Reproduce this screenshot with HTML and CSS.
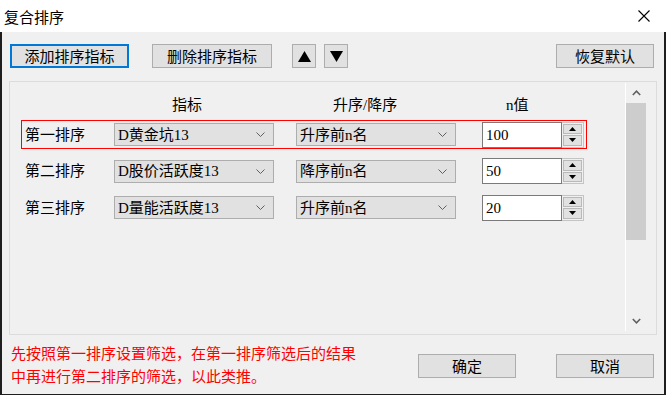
FILE: index.html
```html
<!DOCTYPE html>
<html lang="zh-CN">
<head>
  <meta charset="UTF-8">
  <title>复合排序</title>
  <link rel="stylesheet" href="styles.css">
</head>
<body>
  <div class="window">
    <div class="titlebar">
      <span class="title">复合排序</span>
      <svg class="close" width="12" height="12" viewBox="0 0 12 12"><path d="M0.5 0.5 L11.5 11.5 M11.5 0.5 L0.5 11.5" stroke="#000" stroke-width="1.1" fill="none"/></svg>
    </div>

    <div class="client">
      <div class="toolbar">
        <button class="btn wide focused">添加排序指标</button>
        <button class="btn wide del">删除排序指标</button>
        <button class="btn arrow up"><svg width="13" height="11" viewBox="0 0 13 11"><polygon points="6.5,0 13,11 0,11" fill="#000"/></svg></button>
        <button class="btn arrow down"><svg width="13" height="11" viewBox="0 0 13 11"><polygon points="0,0 13,0 6.5,11" fill="#000"/></svg></button>
        <button class="btn reset">恢复默认</button>
      </div>

      <div class="panel">
        <div class="list">
          <div class="list-head">
            <span></span>
            <span>指标</span>
            <span>升序/降序</span>
            <span>n值</span>
          </div>

          <div class="row selected">
            <span class="row-label">第一排序</span>
            <div class="combo"><span>D黄金坑13</span><svg width="9" height="5" viewBox="0 0 9 5"><polyline points="0.5,0.5 4.5,4.5 8.5,0.5" stroke="#606060" fill="none"/></svg></div>
            <div class="combo dir"><span>升序前n名</span><svg width="9" height="5" viewBox="0 0 9 5"><polyline points="0.5,0.5 4.5,4.5 8.5,0.5" stroke="#606060" fill="none"/></svg></div>
            <div class="spin">
              <div class="spin-input">100</div>
              <div class="spin-btns">
                <div class="spin-btn"><svg width="7" height="4" viewBox="0 0 7 4"><polygon points="3.5,0 7,4 0,4" fill="#000"/></svg></div>
                <div class="spin-btn"><svg width="7" height="4" viewBox="0 0 7 4"><polygon points="0,0 7,0 3.5,4" fill="#000"/></svg></div>
              </div>
            </div>
          </div>

          <div class="row">
            <span class="row-label">第二排序</span>
            <div class="combo"><span>D股价活跃度13</span><svg width="9" height="5" viewBox="0 0 9 5"><polyline points="0.5,0.5 4.5,4.5 8.5,0.5" stroke="#606060" fill="none"/></svg></div>
            <div class="combo dir"><span>降序前n名</span><svg width="9" height="5" viewBox="0 0 9 5"><polyline points="0.5,0.5 4.5,4.5 8.5,0.5" stroke="#606060" fill="none"/></svg></div>
            <div class="spin">
              <div class="spin-input">50</div>
              <div class="spin-btns">
                <div class="spin-btn"><svg width="7" height="4" viewBox="0 0 7 4"><polygon points="3.5,0 7,4 0,4" fill="#000"/></svg></div>
                <div class="spin-btn"><svg width="7" height="4" viewBox="0 0 7 4"><polygon points="0,0 7,0 3.5,4" fill="#000"/></svg></div>
              </div>
            </div>
          </div>

          <div class="row">
            <span class="row-label">第三排序</span>
            <div class="combo"><span>D量能活跃度13</span><svg width="9" height="5" viewBox="0 0 9 5"><polyline points="0.5,0.5 4.5,4.5 8.5,0.5" stroke="#606060" fill="none"/></svg></div>
            <div class="combo dir"><span>升序前n名</span><svg width="9" height="5" viewBox="0 0 9 5"><polyline points="0.5,0.5 4.5,4.5 8.5,0.5" stroke="#606060" fill="none"/></svg></div>
            <div class="spin">
              <div class="spin-input">20</div>
              <div class="spin-btns">
                <div class="spin-btn"><svg width="7" height="4" viewBox="0 0 7 4"><polygon points="3.5,0 7,4 0,4" fill="#000"/></svg></div>
                <div class="spin-btn"><svg width="7" height="4" viewBox="0 0 7 4"><polygon points="0,0 7,0 3.5,4" fill="#000"/></svg></div>
              </div>
            </div>
          </div>
        </div>

        <div class="scrollbar">
          <div class="sb-arrow"><svg width="9" height="6" viewBox="0 0 9 6"><polyline points="0.8,5 4.5,1.2 8.2,5" stroke="#606060" stroke-width="1.6" fill="none"/></svg></div>
          <div class="thumb"></div>
          <div class="sb-space"></div>
          <div class="sb-arrow"><svg width="9" height="6" viewBox="0 0 9 6"><polyline points="0.8,1 4.5,4.8 8.2,1" stroke="#606060" stroke-width="1.6" fill="none"/></svg></div>
        </div>
      </div>

      <div class="footer">
        <p class="hint">先按照第一排序设置筛选，在第一排序筛选后的结果<br>中再进行第二排序的筛选，以此类推。</p>
        <button class="btn ok">确定</button>
        <button class="btn cancel">取消</button>
      </div>
    </div>
  </div>
</body>
</html>
```

FILE: styles.css
```css
html, body {
  margin: 0;
  padding: 0;
}
body {
  background-color: #1e1e1e;
  font-family: "Noto Sans CJK SC", "Noto Sans", sans-serif;
  font-size: 15px;
  color: #000;
}
.window {
  width: 666px;
  height: 395px;
  display: flex;
  flex-direction: column;
}
.titlebar {
  height: 32px;
  background-color: #fff;
  display: flex;
  align-items: center;
  justify-content: space-between;
  padding: 0 16px 0 4px;
}
.title {
  line-height: 1;
  margin-top: 1px;
}
.close {
  margin-top: -1px;
}
.client {
  flex: 1;
  background-color: #f0f0f0;
  border-style: solid;
  border-color: #1e1e1e;
  border-width: 0 2px 1px 2px;
  display: flex;
  flex-direction: column;
}

/* buttons */
.btn {
  font-family: inherit;
  font-size: 15px;
  height: 24px;
  box-sizing: border-box;
  background-color: #e1e1e1;
  border: 1px solid #adadad;
  padding: 0;
  color: #000;
  line-height: 20px;
  display: flex;
  align-items: center;
  justify-content: center;
}
.btn.focused { border: 2px solid #0078d7; }
.toolbar {
  display: flex;
  margin-top: 12px;
  padding: 0 10px 0 8px;
}
.btn.wide { width: 120px; }
.btn.focused { width: 119px; }
.btn.del { margin-left: 23px; }
.btn.arrow { width: 24px; }
.btn.up { margin-left: 20px; }
.btn.down { margin-left: 8px; }
.btn.reset { margin-left: auto; width: 98px; }

/* list panel */
.panel {
  margin: 13px 7px 0 7px;
  height: 254px;
  box-sizing: border-box;
  border: 1px solid #dcdcdc;
  display: flex;
}
.list {
  flex: 1;
  padding: 13px 0 0 11px;
  font-family: "Liberation Serif", "Noto Sans CJK SC", serif;
}
.list-head {
  display: grid;
  grid-template-columns: 151px 161px 173px auto;
  height: 20px;
  line-height: 20px;
  margin-bottom: 5px;
}
.row {
  display: flex;
  align-items: center;
  width: 566px;
  height: 29px;
  box-sizing: border-box;
  border: 1px solid transparent;
  padding-left: 3px;
}
.row + .row { margin-top: 7.5px; }
.row.selected { border-color: #ff0000; }
.row-label {
  width: 89px;
  line-height: 20px;
}
.combo {
  width: 160px;
  height: 23px;
  box-sizing: border-box;
  background-color: #e1e1e1;
  border: 1px solid #adadad;
  display: flex;
  align-items: center;
  justify-content: space-between;
  padding: 0 8px 0 3px;
  line-height: 20px;
}
.combo.dir { margin-left: 22px; }
.spin {
  display: flex;
  height: 26px;
  margin-left: 26px;
}
.spin-input {
  width: 80px;
  box-sizing: border-box;
  background-color: #fff;
  border: 1px solid #7a7a7a;
  padding-left: 3px;
  line-height: 24px;
}
.spin-btns {
  width: 22px;
  box-sizing: border-box;
  border: 1px solid #c4c4c4;
  border-left: none;
  padding: 1px;
  display: flex;
  flex-direction: column;
  gap: 1px;
}
.spin-btn {
  flex: 1;
  background-color: #e1e1e1;
  border: 1px solid #b9b9b9;
  display: flex;
  align-items: center;
  justify-content: center;
}

/* scrollbar */
.scrollbar {
  width: 20px;
  border-left: 1px solid #fff;
  margin: 1px 10px 3px 0;
  display: flex;
  flex-direction: column;
}
.sb-arrow {
  height: 20px;
  display: flex;
  align-items: center;
  justify-content: center;
}
.thumb {
  height: 137px;
  background-color: #cdcdcd;
}
.sb-space { flex: 1; }

/* footer */
.footer {
  display: flex;
  align-items: flex-start;
  padding: 0 10px 0 9px;
}
.hint {
  flex: 1;
  margin: 6px 0 0;
  color: #ff0000;
  line-height: 23px;
}
.btn.ok {
  width: 98px;
  margin-top: 19px;
}
.btn.cancel {
  width: 98px;
  margin-top: 19px;
  margin-left: 40px;
}
```
